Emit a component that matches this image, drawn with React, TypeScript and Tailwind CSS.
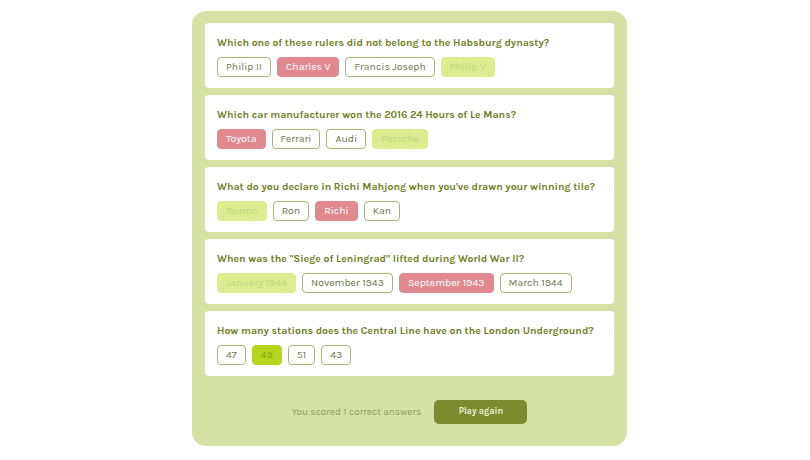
const questions = [
  {
    q: "Which one of these rulers did not belong to the Habsburg dynasty?",
    answers: ["Philip II", "Charles V", "Francis Joseph", "Philip V"],
    picked: 1,
    correct: 3,
  },
  {
    q: "Which car manufacturer won the 2016 24 Hours of Le Mans?",
    answers: ["Toyota", "Ferrari", "Audi", "Porsche"],
    picked: 0,
    correct: 3,
  },
  {
    q: "What do you declare in Richi Mahjong when you've drawn your winning tile?",
    answers: ["Tsumo", "Ron", "Richi", "Kan"],
    picked: 2,
    correct: 0,
  },
  {
    q: 'When was the "Siege of Leningrad" lifted during World War II?',
    answers: ["January 1944", "November 1943", "September 1943", "March 1944"],
    picked: 2,
    correct: 0,
  },
  {
    q: "How many stations does the Central Line have on the London Underground?",
    answers: ["47", "49", "51", "43"],
    picked: 1,
    correct: 1,
  },
];

function answerClass(i: number, picked: number, correct: number) {
  if (i === correct && i === picked)
    return "border-[#b5d51f] bg-[#b5d51f] text-[#8ba21c]";
  if (i === correct) return "border-[#dcec8e] bg-[#dcec8e] text-[#c3d48a]";
  if (i === picked) return "border-[#e0898f] bg-[#e0898f] text-white";
  return "border-[#a9b276] bg-white text-[#6f7650]";
}

export default function App() {
  const score = questions.filter((x) => x.picked === x.correct).length;

  return (
    <div className="flex min-h-[460px] w-full justify-center bg-white pl-[9px] pt-[11px] font-['Karla','Lato',sans-serif]">
      <div className="flex h-[435px] w-[435px] flex-col rounded-[14px] bg-[#d6e1a6] px-[13px] pt-[12px]">
        <div className="flex flex-col gap-[7px]">
          {questions.map((item) => (
            <div
              key={item.q}
              className="h-[65px] rounded-[4px] bg-white px-[12px] pt-[13px]"
            >
              <p className="whitespace-nowrap text-[10.5px] font-bold leading-[14px] text-[#6f7d25]">
                {item.q}
              </p>
              <div className="mt-[7px] flex gap-[6px]">
                {item.answers.map((a, i) => (
                  <span
                    key={a}
                    className={`flex h-[20px] items-center rounded-[4px] border px-[8px] text-[10.5px] ${answerClass(
                      i,
                      item.picked,
                      item.correct
                    )}`}
                  >
                    {a}
                  </span>
                ))}
              </div>
            </div>
          ))}
        </div>
        <div className="mt-[24px] flex items-center justify-center gap-[13px]">
          <span className="text-[10px] text-[#8f9a5d]">
            You scored {score} correct answers
          </span>
          <button
            type="button"
            className="h-[24px] w-[93px] rounded-[5px] bg-[#7c8b2f] text-[9px] font-bold text-[#eef2d8]"
          >
            Play again
          </button>
        </div>
      </div>
    </div>
  );
}
